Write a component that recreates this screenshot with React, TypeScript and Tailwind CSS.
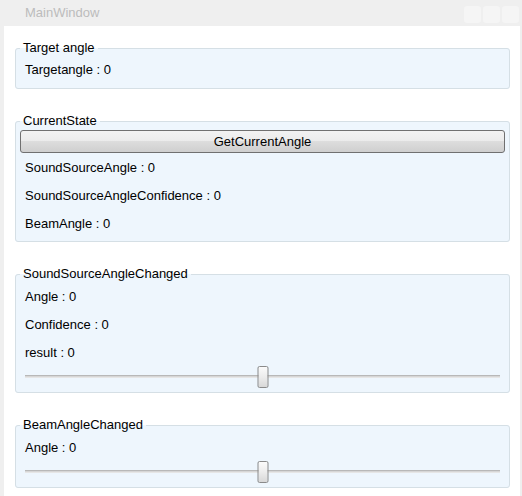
import React from 'react';

const font = { fontFamily: '"Liberation Sans", Arial, sans-serif' };

const Row = ({ children }: { children: React.ReactNode }) => (
  <div className="h-[28px] flex items-center px-[5px] text-[13px] text-black">{children}</div>
);

const Group = ({ title, children }: { title: string; children: React.ReactNode }) => (
  <fieldset className="border border-[#d5dfe5] rounded-[3px] bg-[#eef6fd] px-[4px] pb-[4px]">
    <legend className="px-[3px] text-[13px] leading-[16px] text-black">{title}</legend>
    {children}
  </fieldset>
);

const Slider = () => (
  <div className="relative h-[22px] mx-[5px]">
    <div className="absolute left-0 right-0 top-[9px] h-[3px] border-t border-[#b8b8b8] border-b border-b-[#e6e6e6] bg-[#d6d6d6]" />
    <div className="absolute left-1/2 top-0 -translate-x-1/2 w-[11px] h-[22px] rounded-[2px] border border-[#8a8a8a] bg-gradient-to-b from-[#fbfbfb] via-[#ececec] to-[#d8d8d8]" />
  </div>
);

export default function App() {
  return (
    <div className="w-[522px] h-[496px] bg-[#efefef] flex flex-col" style={font}>
      {/* title bar */}
      <div className="h-[26px] flex items-center justify-between pl-[25px] pr-[3px]">
        <span className="text-[13px] text-[#bcbcbc]">MainWindow</span>
        <div className="flex gap-[2px] self-start mt-[6px]">
          <div className="w-[17px] h-[17px] rounded-[3px] bg-[#f5f5f5]" />
          <div className="w-[17px] h-[17px] rounded-[3px] bg-[#f5f5f5]" />
          <div className="w-[17px] h-[17px] rounded-[3px] bg-[#f5f5f5]" />
        </div>
      </div>
      {/* client area */}
      <div className="flex-1 ml-[4px] mr-[2px] bg-white pl-[11px] pr-[10px] pt-[14px] flex flex-col gap-[24px] overflow-hidden">
        <Group title="Target angle">
          <Row>Targetangle : 0</Row>
        </Group>

        <Group title="CurrentState">
          <button className="w-full h-[23px] rounded-[3px] border border-[#707070] text-[13px] text-black bg-[linear-gradient(#f2f2f2_0%,#ebebeb_50%,#dddddd_50%,#cfcfcf_100%)]">
            GetCurrentAngle
          </button>
          <Row>SoundSourceAngle : 0</Row>
          <Row>SoundSourceAngleConfidence : 0</Row>
          <Row>BeamAngle : 0</Row>
        </Group>

        <Group title="SoundSourceAngleChanged">
          <Row>Angle : 0</Row>
          <Row>Confidence : 0</Row>
          <Row>result : 0</Row>
          <Slider />
        </Group>

        <Group title="BeamAngleChanged">
          <Row>Angle : 0</Row>
          <Slider />
        </Group>
      </div>
    </div>
  );
}
